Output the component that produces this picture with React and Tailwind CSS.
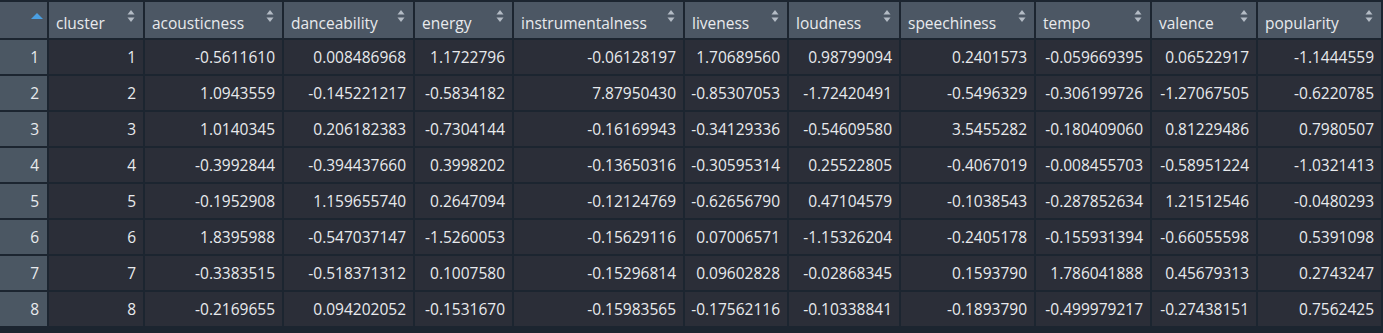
import React from "react";

const cols = [
  "cluster",
  "acousticness",
  "danceability",
  "energy",
  "instrumentalness",
  "liveness",
  "loudness",
  "speechiness",
  "tempo",
  "valence",
  "popularity",
];

const rows = [
  ["1", "-0.5611610", "0.008486968", "1.1722796", "-0.06128197", "1.70689560", "0.98799094", "0.2401573", "-0.059669395", "0.06522917", "-1.1444559"],
  ["2", "1.0943559", "-0.145221217", "-0.5834182", "7.87950430", "-0.85307053", "-1.72420491", "-0.5496329", "-0.306199726", "-1.27067505", "-0.6220785"],
  ["3", "1.0140345", "0.206182383", "-0.7304144", "-0.16169943", "-0.34129336", "-0.54609580", "3.5455282", "-0.180409060", "0.81229486", "0.7980507"],
  ["4", "-0.3992844", "-0.394437660", "0.3998202", "-0.13650316", "-0.30595314", "0.25522805", "-0.4067019", "-0.008455703", "-0.58951224", "-1.0321413"],
  ["5", "-0.1952908", "1.159655740", "0.2647094", "-0.12124769", "-0.62656790", "0.47104579", "-0.1038543", "-0.287852634", "1.21512546", "-0.0480293"],
  ["6", "1.8395988", "-0.547037147", "-1.5260053", "-0.15629116", "0.07006571", "-1.15326204", "-0.2405178", "-0.155931394", "-0.66055598", "0.5391098"],
  ["7", "-0.3383515", "-0.518371312", "0.1007580", "-0.15296814", "0.09602828", "-0.02868345", "0.1593790", "1.786041888", "0.45679313", "0.2743247"],
  ["8", "-0.2169655", "0.094202052", "-0.1531670", "-0.15983565", "-0.17562116", "-0.10338841", "-0.1893790", "-0.499979217", "-0.27438151", "0.7562425"],
];

function SortIcon() {
  return (
    <svg width="8" height="14" viewBox="0 0 8 14" className="shrink-0">
      <path d="M4 1 L7.5 5.5 L0.5 5.5 Z" fill="#b4bcc5" />
      <path d="M0.5 8.5 L7.5 8.5 L4 13 Z" fill="#b4bcc5" />
    </svg>
  );
}

export default function App() {
  return (
    <div
      className="w-[1383px] h-[333px] bg-[#1c2530] overflow-hidden"
      style={{ fontFamily: '"Open Sans", "Noto Sans", sans-serif' }}
    >
      <div className="grid grid-cols-[47px_94px_137px_129px_97px_169px_102px_110px_133px_114px_104px_123px] gap-[2px] pt-[2px] pr-[2px] auto-rows-[34px] text-[15.5px] text-[#e8eaed]">
        <div className="bg-[#4c5764] h-[36px] -mb-[2px] flex items-start justify-end pr-[4px] pt-[11px]">
          <svg width="12" height="6" viewBox="0 0 12 6">
            <path d="M6 0 L12 6 L0 6 Z" fill="#4a9fe2" />
          </svg>
        </div>
        {cols.map((c) => (
          <div
            key={c}
            className="bg-[#4c5764] h-[36px] -mb-[2px] flex items-start justify-between pl-[7px] pr-[8px]"
          >
            <span className="pt-[11px] leading-[20px]">{c}</span>
            <span className="pt-[7px]">
              <SortIcon />
            </span>
          </div>
        ))}
        {rows.map((r, i) => (
          <React.Fragment key={i}>
            <div className="bg-[#4b5763] flex items-center justify-end pr-[8px] mt-[2px] -mb-[2px] pt-[2px]">
              {i + 1}
            </div>
            {r.map((v, j) => (
              <div
                key={j}
                className="bg-[#2b2e38] flex items-center justify-end pr-[7px] mt-[2px] -mb-[2px] pt-[2px]"
              >
                {v}
              </div>
            ))}
          </React.Fragment>
        ))}
      </div>
    </div>
  );
}
